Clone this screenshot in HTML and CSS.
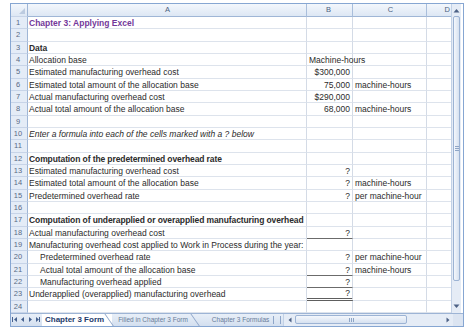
FILE: index.html
```html
<!DOCTYPE html>
<html lang="en">
  <head>
    <meta charset="UTF-8" />
    <meta name="viewport" content="width=device-width, initial-scale=1.0" />
    <title>Chapter 3: Applying Excel</title>
    <link rel="stylesheet" href="styles.css">
  </head>
  <body>
    <div class="excel">
      <div class="main">
        <div class="sheet">
          <div class="row head">
            <div class="rn corner"><span class="tri"></span></div>
            <div class="ca">A</div>
            <div class="cb">B</div>
            <div class="cc">C</div>
            <div class="cd">D</div>
          </div>

          <div class="row"><div class="rn">1</div><div class="ca title">Chapter 3: Applying Excel</div><div class="cb"></div><div class="cc"></div><div class="cd"></div></div>
          <div class="row"><div class="rn">2</div><div class="ca"></div><div class="cb"></div><div class="cc"></div><div class="cd"></div></div>
          <div class="row"><div class="rn">3</div><div class="ca bold">Data</div><div class="cb"></div><div class="cc"></div><div class="cd"></div></div>
          <div class="row"><div class="rn">4</div><div class="ca">Allocation base</div><div class="cb left">Machine-hours</div><div class="cc"></div><div class="cd"></div></div>
          <div class="row"><div class="rn">5</div><div class="ca">Estimated manufacturing overhead cost</div><div class="cb">$300,000</div><div class="cc"></div><div class="cd"></div></div>
          <div class="row"><div class="rn">6</div><div class="ca">Estimated total amount of the allocation base</div><div class="cb">75,000</div><div class="cc">machine-hours</div><div class="cd"></div></div>
          <div class="row"><div class="rn">7</div><div class="ca">Actual manufacturing overhead cost</div><div class="cb">$290,000</div><div class="cc"></div><div class="cd"></div></div>
          <div class="row"><div class="rn">8</div><div class="ca">Actual total amount of the allocation base</div><div class="cb">68,000</div><div class="cc">machine-hours</div><div class="cd"></div></div>
          <div class="row"><div class="rn">9</div><div class="ca"></div><div class="cb"></div><div class="cc"></div><div class="cd"></div></div>
          <div class="row"><div class="rn">10</div><div class="ca note">Enter a formula into each of the cells marked with a ? below</div><div class="cb"></div><div class="cc"></div><div class="cd"></div></div>
          <div class="row"><div class="rn">11</div><div class="ca"></div><div class="cb"></div><div class="cc"></div><div class="cd"></div></div>
          <div class="row"><div class="rn">12</div><div class="ca bold">Computation of the predetermined overhead rate</div><div class="cb"></div><div class="cc"></div><div class="cd"></div></div>
          <div class="row"><div class="rn">13</div><div class="ca">Estimated manufacturing overhead cost</div><div class="cb">?</div><div class="cc"></div><div class="cd"></div></div>
          <div class="row"><div class="rn">14</div><div class="ca">Estimated total amount of the allocation base</div><div class="cb">?</div><div class="cc">machine-hours</div><div class="cd"></div></div>
          <div class="row"><div class="rn">15</div><div class="ca">Predetermined overhead rate</div><div class="cb">?</div><div class="cc">per machine-hour</div><div class="cd"></div></div>
          <div class="row"><div class="rn">16</div><div class="ca"></div><div class="cb"></div><div class="cc"></div><div class="cd"></div></div>
          <div class="row"><div class="rn">17</div><div class="ca bold">Computation of underapplied or overapplied manufacturing overhead</div><div class="cb"></div><div class="cc"></div><div class="cd"></div></div>
          <div class="row"><div class="rn">18</div><div class="ca">Actual manufacturing overhead cost</div><div class="cb under">?</div><div class="cc"></div><div class="cd"></div></div>
          <div class="row"><div class="rn">19</div><div class="ca">Manufacturing overhead cost applied to Work in Process during the year:</div><div class="cb"></div><div class="cc"></div><div class="cd"></div></div>
          <div class="row"><div class="rn">20</div><div class="ca indent">Predetermined overhead rate</div><div class="cb">?</div><div class="cc">per machine-hour</div><div class="cd"></div></div>
          <div class="row"><div class="rn">21</div><div class="ca indent">Actual total amount of the allocation base</div><div class="cb under">?</div><div class="cc">machine-hours</div><div class="cd"></div></div>
          <div class="row"><div class="rn">22</div><div class="ca indent">Manufacturing overhead applied</div><div class="cb under">?</div><div class="cc"></div><div class="cd"></div></div>
          <div class="row"><div class="rn">23</div><div class="ca">Underapplied (overapplied) manufacturing overhead</div><div class="cb double">?</div><div class="cc"></div><div class="cd"></div></div>
          <div class="row"><div class="rn">24</div><div class="ca"></div><div class="cb"></div><div class="cc"></div><div class="cd"></div></div>
        </div>

        <!-- vertical scroll bar -->
        <div class="vscroll">
          <div class="vs-btn">
            <svg width="7" height="5" viewBox="0 0 7 5"><path d="M0.5 4.5 L3.5 1 L6.5 4.5 Z" fill="#4d6185"/></svg>
          </div>
          <div class="vs-thumb"><span class="grip"></span></div>
          <div class="vs-track"></div>
          <div class="vs-btn">
            <svg width="7" height="5" viewBox="0 0 7 5"><path d="M0.5 0.5 L3.5 4 L6.5 0.5 Z" fill="#4d6185"/></svg>
          </div>
        </div>
      </div>

      <!-- sheet tabs -->
      <div class="tabbar">
        <div class="nav">
          <svg width="30" height="7" viewBox="0 0 30 7">
            <rect x="1" y="1" width="1" height="5" fill="#45618f"/>
            <path d="M6 1 L3 3.5 L6 6 Z" fill="#45618f"/>
            <path d="M13 1 L10 3.5 L13 6 Z" fill="#45618f"/>
            <path d="M18 1 L21 3.5 L18 6 Z" fill="#45618f"/>
            <path d="M25 1 L28 3.5 L25 6 Z" fill="#45618f"/>
            <rect x="28" y="1" width="1" height="5" fill="#45618f"/>
          </svg>
        </div>
        <div class="tab active">Chapter 3 Form</div>
        <div class="tab">Filled in Chapter 3 Form</div>
        <div class="tab last">Chapter 3 Formulas</div>
        <div class="split"></div>
        <div class="hscroll">
          <div class="hs-btn">
            <svg width="4" height="6" viewBox="0 0 4 6"><path d="M3.5 0.5 L0.5 3 L3.5 5.5 Z" fill="#4d6185"/></svg>
          </div>
          <div class="hs-thumb"><span class="hgrip"></span></div>
          <div class="hs-track"></div>
          <div class="hs-btn">
            <svg width="4" height="6" viewBox="0 0 4 6"><path d="M0.5 0.5 L3.5 3 L0.5 5.5 Z" fill="#4d6185"/></svg>
          </div>
        </div>
        <div class="hs-corner"></div>
      </div>
    </div>
  </body>
</html>
```

FILE: styles.css
```css
body {
  margin: 0;
  padding: 0;
  background-color: #fff;
  font-family: "Liberation Sans", Arial, sans-serif;
  color: #2b2b2b;
}
.excel {
  margin: 3px 0 0 10px;
  width: 452px;
  border: 1px solid #86a6d2;
  background-color: #fff;
}
.main {
  display: flex;
}
.sheet {
  width: 440px;
  overflow: hidden;
}
.row {
  display: flex;
  height: 12.33px;
  font-size: 8.5px;
  line-height: 12px;
}
.row > div {
  flex: none;
  box-sizing: border-box;
  border-right: 1px solid #d4dbe6;
  border-bottom: 1px solid #dde3ec;
  white-space: nowrap;
  overflow: visible;
}
.rn {
  width: 17px;
  padding-right: 2px;
  text-align: center;
  font-size: 7.5px;
  color: #586a85;
  background-color: #e4ecf7;
  border-right-color: #9fb6d6 !important;
  border-bottom-color: #c7d4e8 !important;
}
.ca {
  width: 279px;
  padding-left: 1px;
}
.cb {
  width: 46px;
  padding-right: 2px;
  text-align: right;
}
.cc {
  width: 74px;
  padding-left: 2px;
}
.cd {
  width: 24px;
  border-right: none !important;
}
.left {
  text-align: left;
  padding-left: 2px;
}

/* header row */
.head {
  height: 13px;
  line-height: 12px;
  font-size: 7.5px;
}
.head > div {
  text-align: center;
  color: #4a5f80;
  background: linear-gradient(#f3f7fc, #dde7f4);
  border-right-color: #a9bedb;
  border-bottom: 1px solid #9fb6d6;
}
.head .cd {
  text-align: right;
  padding-right: 1px;
}
.corner {
  position: relative;
}
.tri {
  position: absolute;
  right: 2px;
  bottom: 2px;
  width: 0;
  height: 0;
  border-left: 6px solid transparent;
  border-bottom: 6px solid #bccbe0;
}

/* cell formats */
.title {
  font-weight: bold;
  color: #73389a;
}
.bold {
  font-weight: bold;
  letter-spacing: -0.1px;
}
.note {
  font-style: italic;
}
.indent {
  padding-left: 12px;
}
.under {
  border-bottom: 1px solid #6b6b6b !important;
}
.double {
  border-bottom: 3px double #5e5e5e !important;
  line-height: 10px;
}

/* scroll bars */
.vscroll {
  width: 10px;
  display: flex;
  flex-direction: column;
  background-color: #e5ecf6;
  border-left: 1px solid #c2d1e6;
  box-sizing: border-box;
}
.vs-btn {
  height: 12px;
  display: flex;
  align-items: center;
  justify-content: center;
}
.vs-thumb {
  height: 265px;
  margin: 0 0 0 1px;
  width: 7px;
  box-sizing: border-box;
  border: 1px solid #9cb3d4;
  border-radius: 2px;
  background: linear-gradient(to right, #f4f7fc, #d6e1f0);
  display: flex;
  align-items: center;
  justify-content: center;
}
.grip {
  width: 4px;
  height: 5px;
  background: repeating-linear-gradient(#8ea5c6 0 1px, transparent 1px 2px);
}
.vs-track {
  flex: 1;
}

/* tab bar */
.tabbar {
  display: flex;
  align-items: stretch;
  height: 13px;
  background: linear-gradient(#e8eff8, #d3dfef);
  border-top: 1px solid #9db4d5;
  box-sizing: border-box;
}
.nav {
  width: 31px;
  display: flex;
  align-items: center;
}
.tab {
  position: relative;
  padding: 0 10px 0 6px;
  font-size: 6.5px;
  line-height: 12px;
  color: #687c99;
  white-space: nowrap;
}
.tab::after {
  content: "";
  position: absolute;
  right: 2px;
  top: 0;
  width: 1px;
  height: 13px;
  background-color: #8ea6c9;
  transform: skewX(35deg);
}
.tab.active {
  padding: 0 8px 0 3px;
  font-size: 8px;
  font-weight: bold;
  color: #1d3b6b;
  background-color: #fff;
}
.tab.last {
  padding-left: 14px;
  padding-right: 2px;
}
.tab.last::after {
  display: none;
}
.split {
  width: 6px;
  margin: 2px 2px 2px 2px;
  border-left: 1px solid #8ea6c9;
  border-right: 1px solid #8ea6c9;
}
.hscroll {
  flex: 1;
  display: flex;
  align-items: center;
  background-color: #e5ecf6;
  border-left: 1px solid #c2d1e6;
}
.hs-btn {
  width: 11px;
  display: flex;
  align-items: center;
  justify-content: center;
}
.hs-thumb {
  width: 112px;
  height: 9px;
  box-sizing: border-box;
  border: 1px solid #9cb3d4;
  border-radius: 2px;
  background: linear-gradient(#f4f7fc, #d6e1f0);
  display: flex;
  align-items: center;
  justify-content: center;
}
.hgrip {
  width: 5px;
  height: 4px;
  background: repeating-linear-gradient(to right, #8ea5c6 0 1px, transparent 1px 2px);
}
.hs-track {
  flex: 1;
}
.hs-corner {
  width: 10px;
  background-color: #dbe4f1;
}
```
